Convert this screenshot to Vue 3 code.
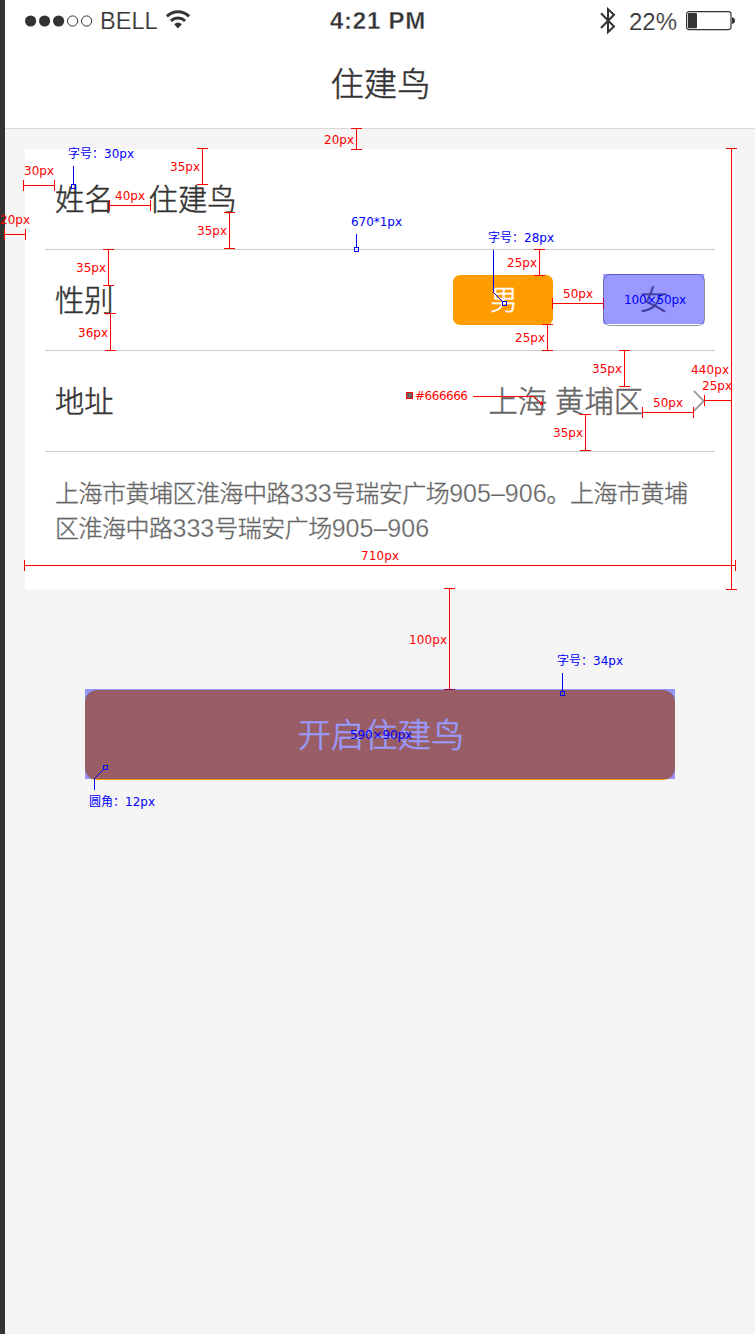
<script setup>
const address = [
  [
    { t: '上海市黄埔区淮海中路' }, { t: '333', n: true }, { t: '号瑞安广场' },
    { t: '905–906', n: true }, { t: '。上海市黄埔' },
  ],
  [
    { t: '区淮海中路' }, { t: '333', n: true }, { t: '号瑞安广场' }, { t: '905–906', n: true },
  ],
]

// vertical dimension lines: x, top, bottom
const vertical = [
  [356, 128, 149], [202, 148, 184], [229, 212, 248], [108, 249, 285], [110, 313, 350],
  [539, 249, 275], [547, 324, 350], [624, 350, 386], [585, 414, 450], [731, 148, 589],
  [449, 588, 689],
]
// horizontal dimension lines: y, left, right
const horizontal = [
  [185, 23, 54], [205, 109, 150], [234, 4, 25], [303, 552, 603], [412, 642, 693],
  [400, 704, 731], [565, 24, 735],
]
const vPath = ([x, a, b]) =>
  `M${x + 0.5} ${a}V${b + 1}M${x - 5} ${a + 0.5}h11M${x - 5} ${b + 0.5}h11`
const hPath = ([y, a, b]) =>
  `M${a} ${y + 0.5}H${b + 1}M${a + 0.5} ${y - 5}v11M${b + 0.5} ${y - 5}v11`

// text, x, baseline, width
const sizes = [
  ['30px', 24, 175, 30], ['35px', 170, 171, 30], ['40px', 115, 200, 30], ['20px', 0, 224, 30],
  ['35px', 197, 235, 30], ['35px', 76, 272, 30], ['36px', 78, 337, 30], ['20px', 324, 144, 30],
  ['25px', 507, 267, 30], ['25px', 515, 342, 30], ['50px', 563, 298, 30], ['35px', 592, 373, 30],
  ['440px', 691, 374, 38], ['25px', 702, 390, 30], ['50px', 653, 407, 30], ['35px', 553, 437, 30],
  ['#666666', 415, 400, 53], ['710px', 361, 560, 38], ['100px', 409, 644, 38],
]
const notes = [
  ['字号：', 68, 158, 36], ['30px', 104, 158, 30], ['670*1px', 351, 226, 51],
  ['字号：', 488, 242, 36], ['28px', 524, 242, 30], ['100×50px', 624, 304, 62],
  ['字号：', 557, 665, 36], ['34px', 593, 665, 30], ['590×90px', 350, 739, 62],
  ['圆角：', 89, 806, 36], ['12px', 125, 806, 30],
]
const pins = [[71, 184], [354, 247], [502, 301], [560, 691], [103, 765]]
</script>

<template>
  <div class="page">
    <div class="edge"></div>
    <main class="screen">
      <header>
        <div class="status">
          <div class="carrier">
            <svg class="dots" width="68" height="12" viewBox="0 0 68 12">
              <circle v-for="i in 3" :key="i" :cx="i * 14 - 8.4" cy="6" r="5.6" fill="#333" />
              <circle v-for="i in 2" :key="'o' + i" :cx="33.6 + i * 14" cy="6" r="5.1" fill="none" stroke="#333" />
            </svg>
            <span class="bell">BELL</span>
            <svg class="wifi" width="24" height="19" viewBox="0 0 24 19" fill="none" stroke="#333">
              <path d="M.9 6.3Q6 1.7 12 1.7T23.1 6.3" stroke-width="3" />
              <path d="M4.9 10.8Q8 8 12 8T19.1 10.8" stroke-width="2.9" />
              <path d="M8.200 14.300Q10 12.400 12 12.400T15.800 14.300L12 18.400Z" fill="#333" stroke="none" />
            </svg>
          </div>
          <span class="time">4:21 PM</span>
          <div class="power">
            <svg width="16" height="28" viewBox="0 0 16 28" fill="none" stroke="#333" stroke-width="2">
              <path d="M1 6.2L14 19.5 8 25.2V2.2L14 7.8 1 21" />
            </svg>
            <span class="percent">22%</span>
            <svg class="battery" width="50" height="20" viewBox="0 0 50 20">
              <rect x=".6" y=".6" width="44.4" height="18" rx="2.5" fill="none" stroke="#333" stroke-width="1.2" />
              <rect x="2" y="2" width="9" height="15.2" rx="1" fill="#333" />
              <path d="M46 6.3Q49 6.800 49 9.6T46 13Z" fill="#333" />
            </svg>
          </div>
        </div>
        <h1>住建鸟</h1>
      </header>

      <section class="card">
        <div class="row">
          <span class="label">姓名</span><span class="name">住建鸟</span>
        </div>
        <div class="row">
          <span class="label">性别</span>
          <div class="choices">
            <button class="choice male">男</button>
            <button class="choice female">女</button>
          </div>
        </div>
        <div class="row">
          <span class="label">地址</span>
          <div class="region">
            <span class="label">上海</span><span class="label district">黄埔区</span>
            <svg width="12" height="22" viewBox="0 0 12 22"><path d="M.8 .8L10.8 11 .8 21.2" fill="none" stroke="#999" stroke-width="1.8" /></svg>
          </div>
        </div>
        <div class="address">
          <div v-for="(line, i) in address" :key="i" class="line"><span v-for="(s, j) in line" :key="j" :class="{ num: s.n }">{{ s.t }}</span></div>
        </div>
      </section>

      <button class="submit">开启住建鸟</button>
    </main>

    <svg class="marks" width="755" height="1334" viewBox="0 0 755 1334">
      <g stroke="#f00" fill="none">
        <path v-for="(l, i) in vertical" :key="'v' + i" :d="vPath(l)" />
        <path v-for="(l, i) in horizontal" :key="'h' + i" :d="hPath(l)" />
        <path d="M473 396.500H534L541.500 403.500" />
        <rect x="406.500" y="392.500" width="6" height="6" fill="#666" />
      </g>
      <rect x="540" y="402" width="3" height="3" fill="#f00" />
      <g fill="#00f" fill-opacity=".4">
        <rect x="603.300" y="274" width="100.900" height="50" />
        <rect x="85" y="689" width="590" height="90" />
      </g>
      <g stroke="#00f" fill="none">
        <path d="M73.500 166V184M356.500 234V247M493.500 250V292.500L502.500 301.500M562.500 673V691M94.500 790V778.500L103.500 769.500" />
        <rect v-for="(p, i) in pins" :key="i" :x="p[0] + 0.5" :y="p[1] + 0.5" width="4" height="4" />
      </g>
      <g fill="#f00">
        <text v-for="(s, i) in sizes" :key="i" :x="s[1]" :y="s[2]" :textLength="s[3]">{{ s[0] }}</text>
      </g>
      <g fill="#00f">
        <text v-for="(s, i) in notes" :key="i" :x="s[1]" :y="s[2]" :textLength="s[3]">{{ s[0] }}</text>
      </g>
    </svg>
  </div>
</template>

<style>
body { background: #f5f5f5; }
</style>

<style scoped>
.page {
  position: relative;
  display: flex;
  width: 755px;
  height: 1334px;
  overflow: hidden;
  background: #f5f5f5;
  color: #333;
  font-family: "Noto Sans CJK SC", sans-serif;
  font-weight: 300;
}
.edge { width: 5px; background: #333; }
.screen { width: 750px; }
header {
  box-sizing: border-box;
  height: 129px;
  background: #fff;
  border-bottom: 1px solid #d9d9d9;
}
.status {
  display: grid;
  grid-template-columns: 1fr auto 1fr;
  align-items: center;
  height: 41px;
  padding: 0 20px;
  font: 24px/39px "Liberation Sans", sans-serif;
}
.carrier, .power { display: flex; align-items: center; }
.bell { margin: 2px 0 0 7px; width: 58px; font-size: 23.6px; -webkit-text-stroke: .2px #fff; }
.wifi { margin-left: 8px; margin-top: -2px; }
.time { margin: 0 4px 0 0; font-weight: 700; letter-spacing: .75px; white-space: nowrap; -webkit-text-stroke: .3px #fff; }
.power { justify-content: flex-end; margin-right: -1px; }
.percent { margin: 1px 9px 0 13px; -webkit-text-stroke: .2px #fff; }
.battery { margin-top: 1px; }
h1 {
  margin: 17px 0 0 1px;
  font-size: 33.300px;
  font-weight: 300;
  line-height: 48px;
  text-align: center;
  -webkit-text-stroke: .5px currentColor;
}
.card {
  box-sizing: border-box;
  width: 710px;
  height: 440px;
  margin: 20px 20px 0;
  padding: 0 20px;
  background: #fff;
}
.row {
  box-sizing: border-box;
  display: flex;
  align-items: center;
  height: 101px;
  padding: 0 10px;
  border-bottom: 1px solid #ccc;
  font-size: 29.300px;
  -webkit-text-stroke: .5px currentColor;
}
.label, .name { margin-bottom: 4px; }
.name { margin-left: 35px; }
.choices { display: flex; gap: 50px; margin-left: auto; }
.choice {
  box-sizing: border-box;
  width: 100px;
  height: 50px;
  padding: 0 0 3px;
  border: 0;
  border-radius: 7px;
  color: #fff;
  background: #ff9c00;
  font: 300 27.500px/47px "Noto Sans CJK SC", sans-serif;
  -webkit-text-stroke: .5px currentColor;
}
.male { padding-left: 2px; }
.female {
  width: 102px;
  height: 52px;
  margin: -1px 0;
  border: 1px solid #999;
  color: #666;
  background: #fff;
}
.region { display: flex; align-items: center; margin-left: auto; color: #666; }
.region .district { margin: 0 50px 4px 8px; }
.address {
  padding: 22px 10px 0;
  color: #666;
  font-size: 24px;
  letter-spacing: -.5px;
  -webkit-text-stroke: .35px currentColor;
}
.line { height: 35px; line-height: 35px; white-space: nowrap; }
.num {
  font-family: "Liberation Sans", sans-serif;
  font-size: 25px;
  font-weight: 400;
  letter-spacing: 0;
  -webkit-text-stroke: .25px #fff;
}
.submit {
  display: block;
  width: 590px;
  height: 90px;
  margin: 101px auto 0 80px;
  padding: 0 0 4px 2px;
  border: 0;
  border-radius: 12px;
  background: #ff9c00;
  color: #fff;
  font: 300 33.300px/86px "Noto Sans CJK SC", sans-serif;
  -webkit-text-stroke: .5px currentColor;
}
.marks {
  position: absolute;
  inset: 0;
  font: 12px "DejaVu Sans", "Noto Sans CJK SC", sans-serif;
}
</style>
